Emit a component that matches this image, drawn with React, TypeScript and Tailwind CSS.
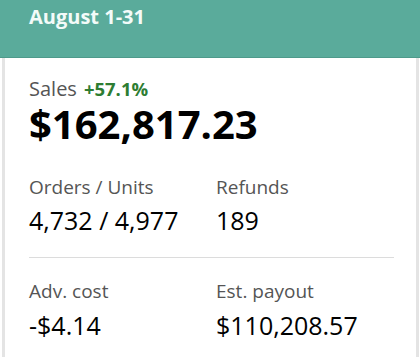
import React from "react";

export default function App() {
  return (
    <div className="w-[420px] h-[357px] bg-white overflow-hidden" style={{ fontFamily: '"Open Sans", "Noto Sans", sans-serif' }}>
      <div className="h-[58px] bg-[#5aab9b] border-b border-[#4e9a8b] pl-[29px] pt-[7px]">
        <div className="text-[20px] leading-none font-bold text-[#f3fbf9]">August 1-31</div>
      </div>
      <div className="ml-[2px] mr-[1px] h-[299px] border-l-[3px] border-r-[3px] border-[#e4e4e4] pl-[24px] pr-[22px]">
        <div className="pt-[21px] flex items-baseline gap-[7px]">
          <span className="text-[20px] leading-none text-[#555555]">Sales</span>
          <span className="text-[18.5px] leading-none font-bold text-[#2e7d32]">+57.1%</span>
        </div>
        <div className="mt-[5px] text-[40px] leading-none font-bold text-black">$162,817.23</div>
        <div className="mt-[34px] grid grid-cols-[187px_1fr]">
          <div>
            <div className="text-[19px] leading-none text-[#555555]">Orders / Units</div>
            <div className="mt-[11px] text-[25px] leading-none text-black">4,732 / 4,977</div>
          </div>
          <div>
            <div className="text-[19px] leading-none text-[#555555]">Refunds</div>
            <div className="mt-[11px] text-[25px] leading-none text-black">189</div>
          </div>
        </div>
        <div className="mt-[24px] h-px bg-[#dcdcdc]" />
        <div className="mt-[24px] grid grid-cols-[187px_1fr]">
          <div>
            <div className="text-[19px] leading-none text-[#555555]">Adv. cost</div>
            <div className="mt-[12px] text-[25px] leading-none text-black">-$4.14</div>
          </div>
          <div>
            <div className="text-[19px] leading-none text-[#555555]">Est. payout</div>
            <div className="mt-[12px] text-[25px] leading-none text-black">$110,208.57</div>
          </div>
        </div>
      </div>
    </div>
  );
}
